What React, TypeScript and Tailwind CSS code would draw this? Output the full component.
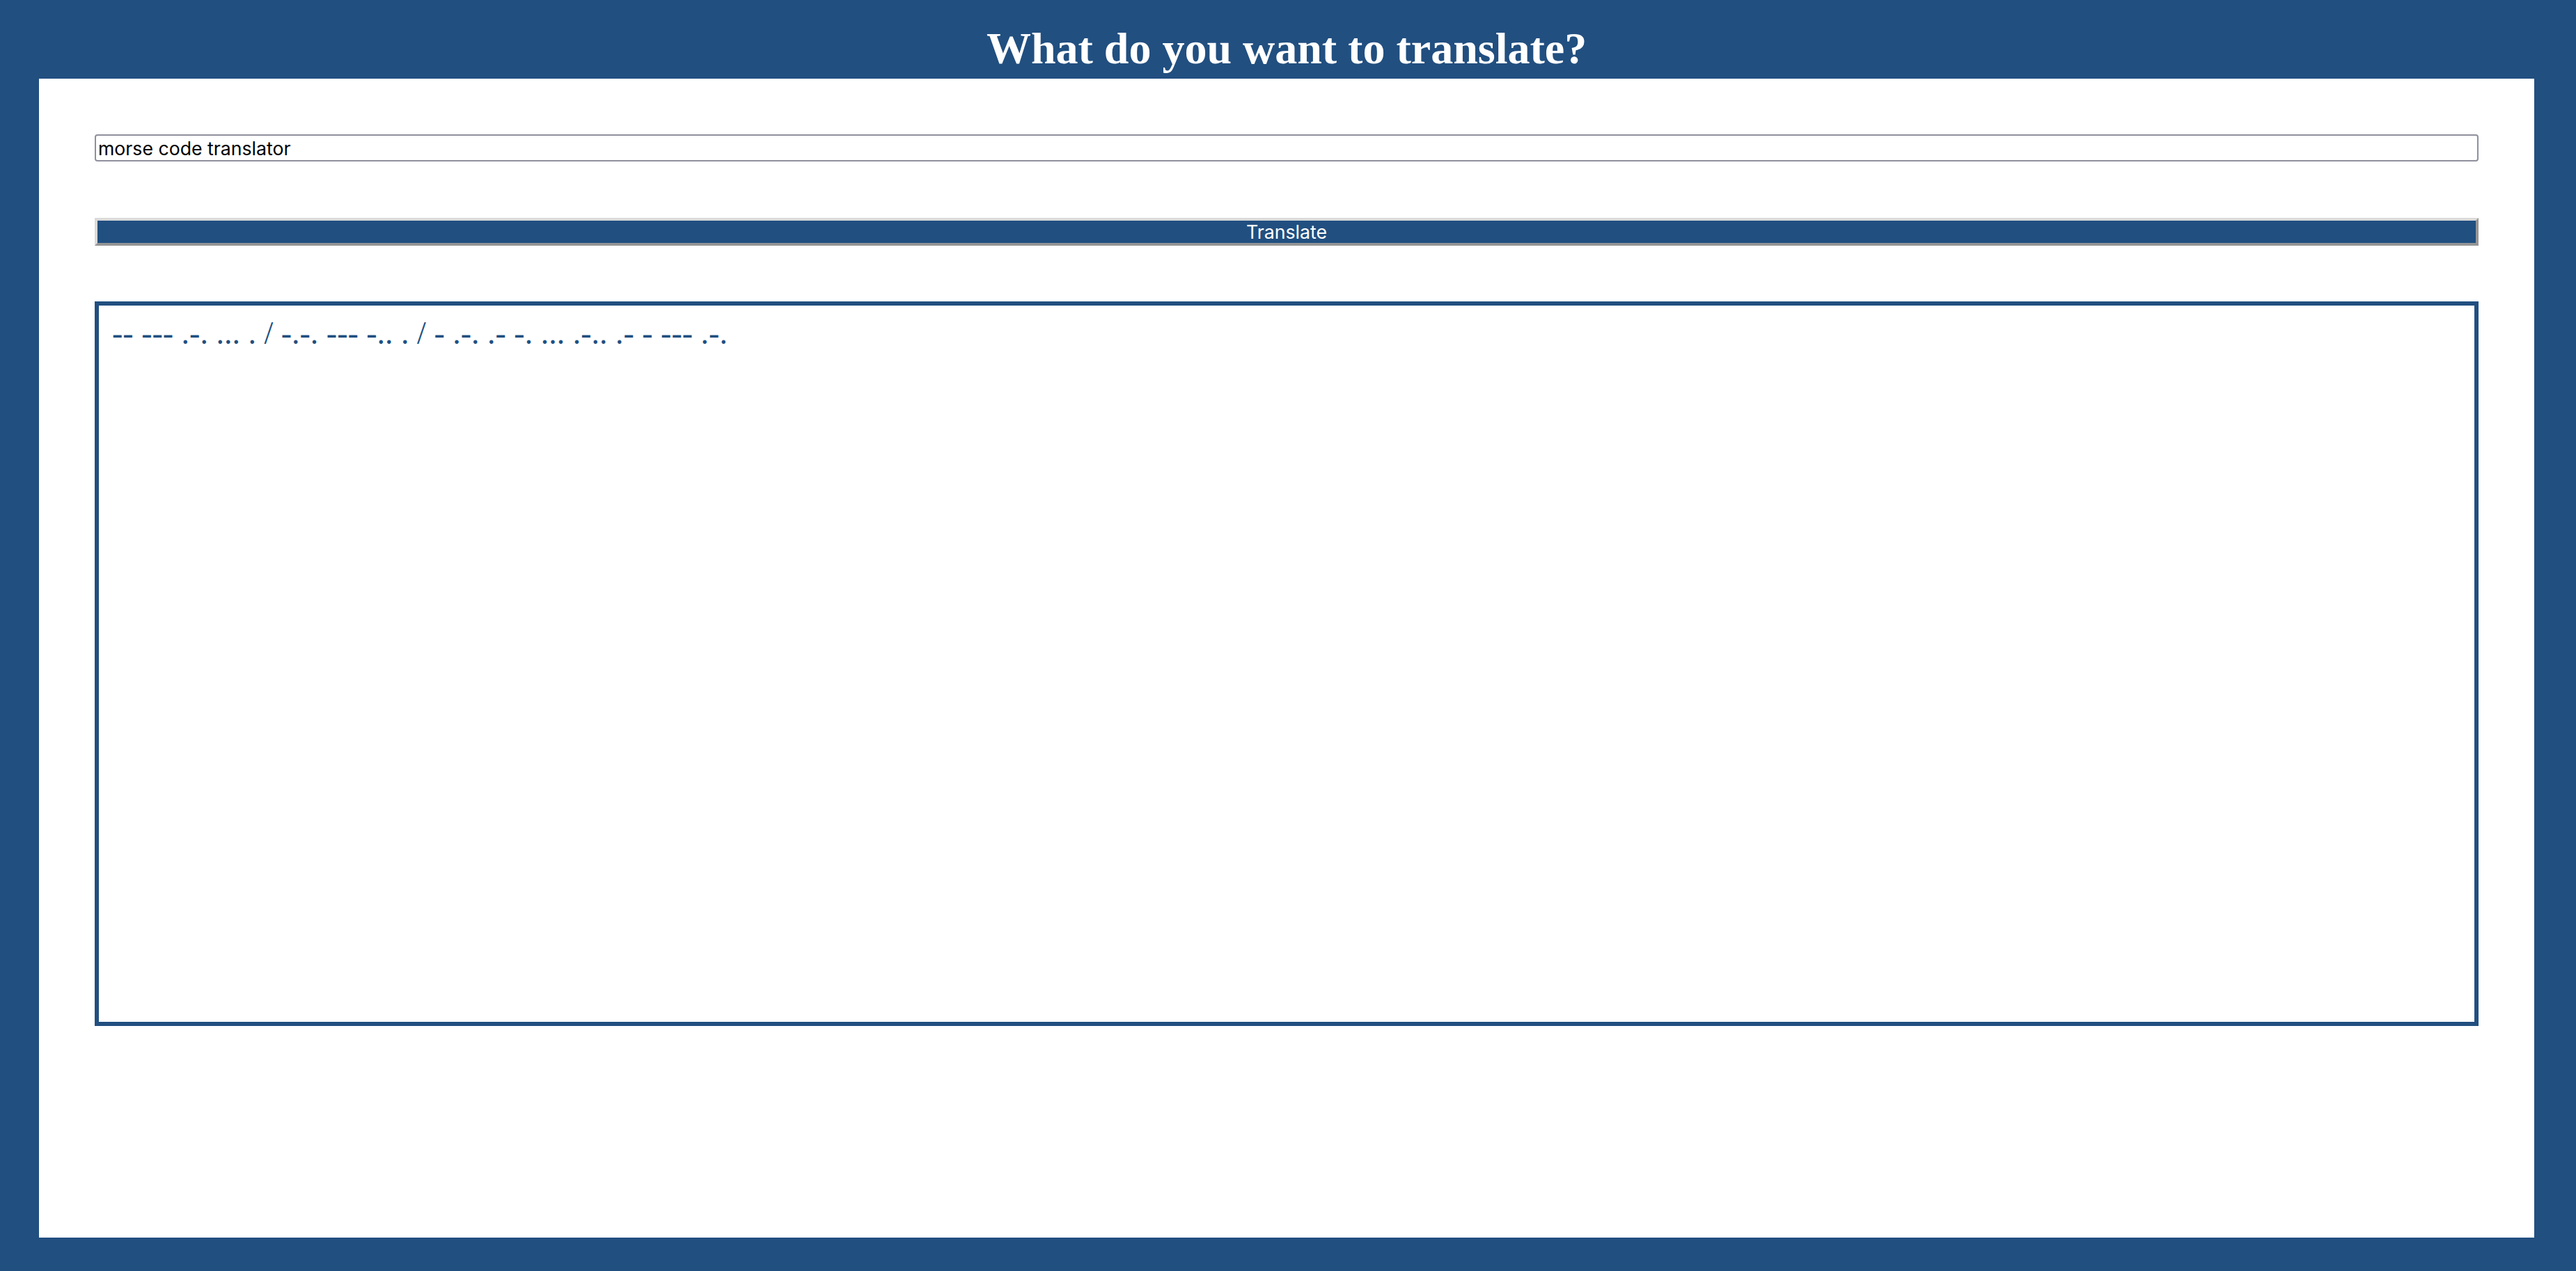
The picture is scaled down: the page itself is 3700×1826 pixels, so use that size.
import { useState } from "react";

const MORSE: Record<string, string> = {
  a: ".-", b: "-...", c: "-.-.", d: "-..", e: ".", f: "..-.", g: "--.", h: "....",
  i: "..", j: ".---", k: "-.-", l: ".-..", m: "--", n: "-.", o: "---", p: ".--.",
  q: "--.-", r: ".-.", s: "...", t: "-", u: "..-", v: "...-", w: ".--", x: "-..-",
  y: "-.--", z: "--..",
};

function toMorse(text: string) {
  return text
    .toLowerCase()
    .split(" ")
    .map((word) =>
      word
        .split("")
        .map((ch) => MORSE[ch] ?? "")
        .filter(Boolean)
        .join(" ")
    )
    .join(" / ");
}

export default function App() {
  const [input, setInput] = useState("morse code translator");
  const [output, setOutput] = useState(toMorse("morse code translator"));

  return (
    <div className="flex h-[1826px] flex-col bg-[#214f80] pb-[48px] pl-[56px] pr-[60px]">
      <header className="h-[113px] pt-[34px] text-center">
        <h1 className="font-['Liberation_Serif',serif] text-[64px] font-bold leading-[71px] text-white">
          What do you want to translate?
        </h1>
      </header>
      <main className="flex-1 bg-white px-[80px] pt-[80px]">
        <input
          value={input}
          onChange={(e) => setInput(e.target.value)}
          className="block h-[39px] w-full rounded-[4px] border-2 border-[#8f8f9d] px-[3px] font-['Inter',sans-serif] text-[26.67px] text-black outline-none"
        />
        <button
          onClick={() => setOutput(toMorse(input))}
          className="mt-[81px] block h-[40px] w-full border-4 border-b-[#959595] border-l-[#dadada] border-r-[#959595] border-t-[#dadada] bg-[#214f80] font-['Inter',sans-serif] text-[26.67px] leading-none text-white"
        >
          Translate
        </button>
        <div className="mt-[80px] h-[1041px] border-[6px] border-[#214f80] px-[19px] pt-[14px]">
          <p className="font-['Liberation_Serif',serif] text-[46px] leading-[52px] text-[#214f80]">{output}</p>
        </div>
      </main>
    </div>
  );
}
